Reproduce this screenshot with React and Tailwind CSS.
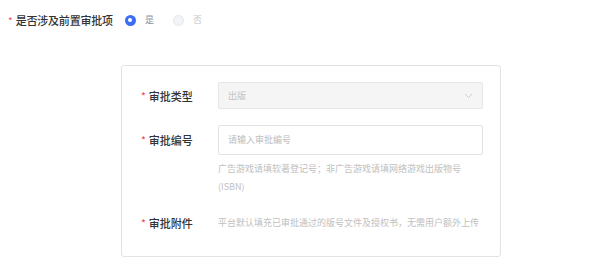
import React from "react";

const font = { fontFamily: '"Noto Sans CJK SC", "Noto Sans", sans-serif' };

function Label({ text }) {
  return (
    <div className="w-[75px] shrink-0 flex items-center pl-[19px] text-[11px] leading-[18px] text-[#333333] font-medium">
      <span className="text-[#f5505a] text-[10px] mr-[3px]">*</span>
      <span>{text}</span>
    </div>
  );
}

export default function App() {
  return (
    <div
      className="w-[614px] h-[271px] bg-white overflow-hidden"
      style={font}
    >
      <div className="flex items-center h-[18px] mt-[11px] pl-[8px]">
        <span className="text-[#f5505a] text-[10px] mr-[3px]">*</span>
        <span className="text-[11px] text-[#333333] font-medium tracking-[-0.2px]">
          是否涉及前置审批项
        </span>
        <div className="ml-[12px] flex items-center">
          <span className="w-[11px] h-[11px] rounded-full bg-[#3b6ef5] flex items-center justify-center">
            <span className="w-[4px] h-[4px] rounded-full bg-white" />
          </span>
          <span className="ml-[9px] text-[9px] text-[#8a8f99]">是</span>
        </div>
        <div className="ml-[19px] flex items-center">
          <span className="w-[11px] h-[11px] rounded-full bg-[#f2f4f8] border border-[#e4e7ee]" />
          <span className="ml-[9px] text-[9px] text-[#c4c7cc]">否</span>
        </div>
      </div>

      <div className="ml-[121px] mt-[36px] w-[380px] h-[192px] border border-[#e3e3e3] rounded-[3px] pt-[16px]">
        <div className="flex items-center">
          <Label text="审批类型" />
          <div className="ml-[21px] w-[265px] h-[27px] bg-[#f5f5f5] border border-[#e6e6e6] rounded-[2px] flex items-center justify-between pl-[9px] pr-[9px]">
            <span className="text-[9px] text-[#c2c2c2]">出版</span>
            <svg width="9" height="6" viewBox="0 0 9 6" fill="none">
              <path d="M1 1l3.5 3.5L8 1" stroke="#cfcfcf" strokeWidth="1" />
            </svg>
          </div>
        </div>

        <div className="flex items-center mt-[16px]">
          <Label text="审批编号" />
          <div className="ml-[21px] w-[265px] h-[30px] bg-white border border-[#e3e3e3] rounded-[2px] flex items-center pl-[9px]">
            <span className="text-[9px] text-[#bdbdbd]">请输入审批编号</span>
          </div>
        </div>

        <div className="ml-[96px] mt-[5px] w-[265px] text-[9px] leading-[18px] text-[#c0c0c0]">
          广告游戏请填软著登记号；非广告游戏请填网络游戏出版物号
          <br />
          (ISBN)
        </div>

        <div className="flex items-center mt-[18px]">
          <Label text="审批附件" />
          <div className="ml-[21px] text-[9px] leading-[18px] text-[#c0c0c0]">
            平台默认填充已审批通过的版号文件及授权书，无需用户额外上传
          </div>
        </div>
      </div>
    </div>
  );
}
